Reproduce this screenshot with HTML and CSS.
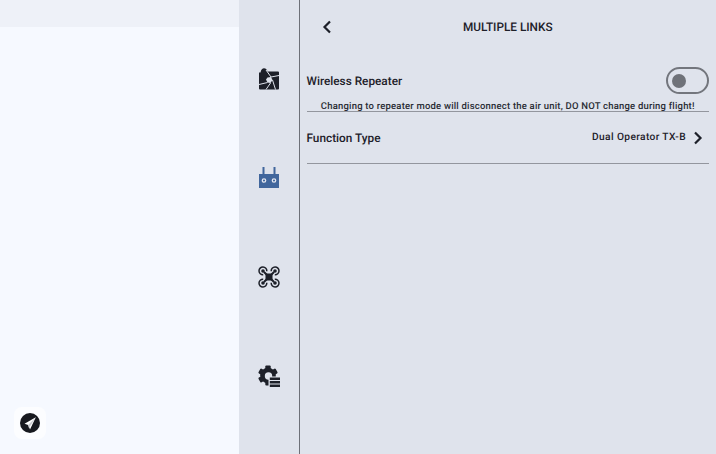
FILE: index.html
```html
<!DOCTYPE html>
<html lang="en">
<head>
<meta charset="utf-8">
<title>Multiple Links</title>
<link rel="stylesheet" href="styles.css">
</head>
<body>
<div class="app">
  <aside class="left">
    <div class="left-top"></div>
    <div class="left-body">
      <div class="fab">
        <svg width="20" height="20" viewBox="0 0 20 20"><circle cx="10" cy="10" r="10" fill="#17191f"/><path d="M15.800 4.200 4.500 10.800l3.700 1.300 1.800 4.500z" fill="#fff"/><path d="M15.800 4.200 8.200 12.100l.5 2.700 1.500-1.900z" fill="#c9cbd0"/></svg>
      </div>
    </div>
  </aside>
  <nav class="rail">
    <div class="rail-item">
      <svg width="22" height="22" viewBox="0 0 22 22"><path fill="#1d2029" d="M1 4.500h1.500C3 1.500 4.500.3 6 .3c2 0 3 1.500 3.500 3.200H20a1 1 0 0 1 1 1V20.500a1 1 0 0 1-1 1H2a1 1 0 0 1-1-1z"/><path fill="#dfe3ec" d="M9.500 9.500l3.500-.5 1.500 3-2 3-3-.5-1.500-3z"/><g stroke="#dfe3ec" stroke-width="1" fill="none"><path d="M8 2 13 9"/><path d="M21 7.500 13 9"/><path d="M14.500 12 17.500 21.500"/><path d="M12.500 15 8 21.500"/><path d="M9.500 14.500 1 16.500"/></g></svg>
    </div>
    <div class="rail-item">
      <svg width="22" height="22" viewBox="0 0 22 22"><path fill="#41669c" d="M4.500 0h2v8h-2zM15.500 0h2v8h-2z"/><path fill="#41669c" fill-rule="evenodd" d="M1 7h20v14H1z"/><g fill="#41669c" stroke="#e4e7f0" stroke-width="1.300"><circle cx="6" cy="13.500" r="1.700"/><circle cx="16" cy="13.500" r="1.700"/></g></svg>
    </div>
    <div class="rail-item">
      <svg width="22" height="22" viewBox="0 0 22 22" fill="none" stroke="#1d2029"><rect x="7.500" y="7.500" width="7" height="7" fill="#1d2029" stroke="none"/><path stroke-width="2" d="M6 6 16 16M16 6 6 16"/><g stroke-width="1.500"><path d="M8.800 5.200A3.900 3.900 0 1 0 5.200 8.800"/><path d="M13.200 5.200A3.900 3.900 0 1 1 16.800 8.800"/><path d="M8.800 16.800A3.900 3.900 0 1 1 5.200 13.200"/><path d="M13.200 16.800A3.900 3.900 0 1 0 16.800 13.200"/></g><g fill="#1d2029" stroke="none"><circle cx="5" cy="5" r="1.800"/><circle cx="17" cy="5" r="1.800"/><circle cx="5" cy="17" r="1.800"/><circle cx="17" cy="17" r="1.800"/></g></svg>
    </div>
    <div class="rail-item">
      <svg width="22" height="22" viewBox="0 0 22 22"><g fill="#1d2029"><circle cx="10" cy="10.500" r="7.800"/><rect x="7.300" y=".6" width="5.400" height="19.800" rx="1"/><rect x="7.300" y=".6" width="5.400" height="19.800" rx="1" transform="rotate(60 10 10.500)"/><rect x="7.300" y=".6" width="5.400" height="19.800" rx="1" transform="rotate(120 10 10.500)"/></g><circle cx="10.500" cy="11" r="3.700" fill="#dfe3ec"/><rect x="10.500" y="11.500" width="12" height="11.500" fill="#dfe3ec"/><path fill="#1d2029" d="M11.800 12.500h10.200v2.500H11.800zM11.800 16h10.200v2.500H11.800zM11.800 19.500h10.200V22H11.800z"/></svg>
    </div>
  </nav>
  <main class="main">
    <header class="head">
      <svg class="back" width="10" height="14" viewBox="0 0 10 14" fill="none" stroke="#1d2029" stroke-width="2.200"><path d="M8 1.500 2.500 7 8 12.500"/></svg>
      <h1 class="title">MULTIPLE LINKS</h1>
    </header>
    <section class="block repeater">
      <div class="row-top">
        <span class="label">Wireless Repeater</span>
        <span class="toggle"><span class="knob"></span></span>
      </div>
      <p class="note">Changing to repeater mode will disconnect the air unit, DO NOT change during flight!</p>
    </section>
    <section class="block func">
      <span class="label">Function Type</span>
      <span class="value">Dual Operator TX-B
        <svg width="10" height="14" viewBox="0 0 10 14" fill="none" stroke="#1d2029" stroke-width="2.200"><path d="M2 1.500 7.500 7 2 12.500"/></svg>
      </span>
    </section>
  </main>
</div>
</body>
</html>
```

FILE: styles.css
```css
* { box-sizing: border-box; }
html, body { margin: 0; padding: 0; height: 100%; }
body { font-family: Roboto, "Liberation Sans", sans-serif; color: #1d2029; overflow: hidden; text-rendering: geometricPrecision; }
.app { display: flex; width: 716px; height: 454px; background: #dfe3ec; }

.left { width: 239px; display: flex; flex-direction: column; background: #f6f9ff; }
.left-top { height: 27px; background: #eef1f8; }
.left-body { flex: 1; display: flex; align-items: flex-end; padding: 0 0 15px 14px; }
.fab { width: 32px; height: 32px; border-radius: 8px; background: #fcfdff; display: flex; align-items: center; justify-content: center; }
.fab svg { display: block; }

.rail { width: 61px; border-right: 1px solid #6d7078; padding-top: 29px; display: flex; flex-direction: column; }
.rail-item { height: 99px; display: flex; align-items: center; justify-content: center; }
.rail-item svg { display: block; }

.main { flex: 1; padding: 0 7px 0 6.500px; }
.head { height: 54px; display: flex; align-items: center; justify-content: center; position: relative; }
.back { position: absolute; left: 15.500px; top: 20px; }
.title { margin: 0; font-size: 11.800px; font-weight: 500; }

.block { border-bottom: 1px solid #93969e; }
.repeater { height: 58px; }
.row-top { height: 53px; display: flex; align-items: center; justify-content: space-between; }
.label { font-size: 11.800px; font-weight: 500; line-height: 16px; padding-top: 1px; }
.note { margin: -7px 0 0; font-size: 9.500px; font-weight: 500; letter-spacing: .2px; text-align: center; line-height: 13px; white-space: nowrap; color: #2a2d35; }
.toggle { width: 43px; height: 27px; border: 2px solid #73767d; border-radius: 14px; display: flex; align-items: center; padding-left: 4px; }
.knob { width: 14px; height: 14px; border-radius: 50%; background: #6f7279; }
.func { height: 52px; display: flex; align-items: center; justify-content: space-between; }
.value { display: flex; align-items: center; gap: 7px; padding-right: 6px; font-size: 10.200px; font-weight: 500; letter-spacing: .38px; }
.value svg { display: block; }
```
